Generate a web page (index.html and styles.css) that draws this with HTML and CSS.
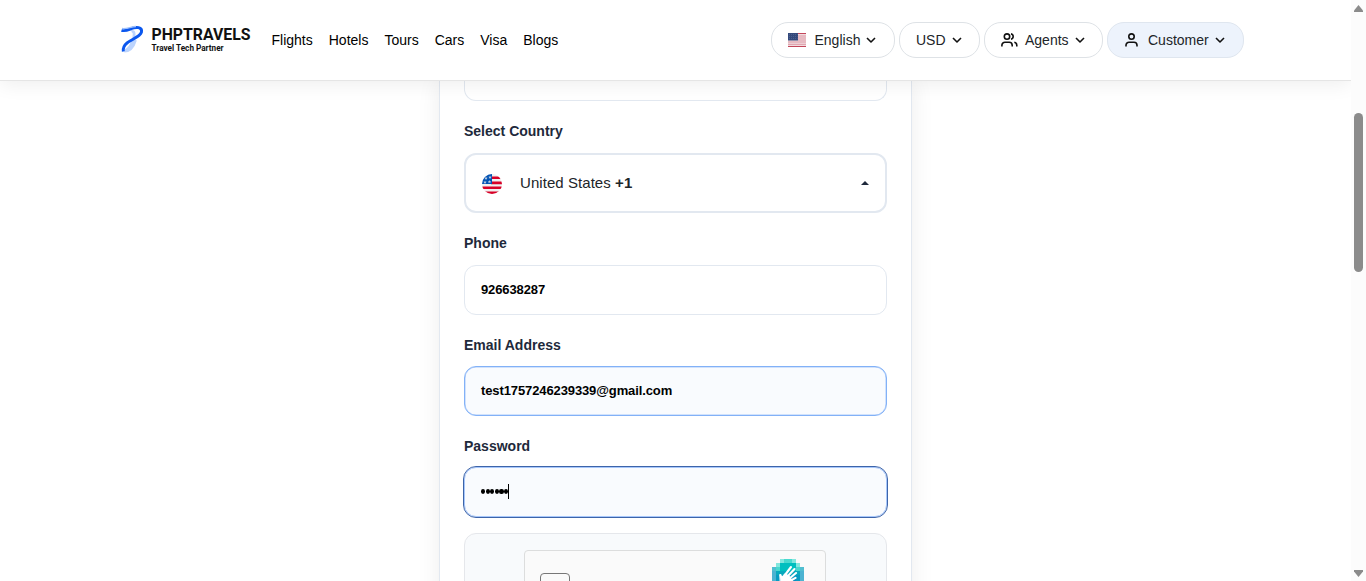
FILE: index.html
```html
<!DOCTYPE html>
<html lang="en">
<head>
<meta charset="utf-8">
<title>PHPTRAVELS</title>
<link rel="stylesheet" href="styles.css">
</head>
<body>
<div class="viewport">
  <div class="page">
    <header class="header">
      <div class="brand">
        <svg class="brand-mark" viewBox="0 0 24 28" fill="none">
          <path d="M11.500 6.500C15 5.500 14.500 11 13 15C11.500 20 9 24.500 4.500 26C11 26 14 20 15.500 15" stroke="#bcd4fd" stroke-width="2.800"/>
          <path d="M1.500 5.300C5 6.500 8 5 11 3.800C16 1.500 22.500 2 21.500 7C20 12 12 14 7 18C4 20.500 2.800 23 3.300 26.500" stroke="#0b57ee" stroke-width="2.900"/>
          <path d="M2 3.500C7 4.300 11 1.500 16 1.500" stroke="#9fc0fb" stroke-width="1.300"/>
        </svg>
        <div class="brand-text">
          <span class="brand-name">PHPTRAVELS</span>
          <span class="brand-tag">Travel Tech Partner</span>
        </div>
      </div>
      <nav class="nav"><a>Flights</a><a>Hotels</a><a>Tours</a><a>Cars</a><a>Visa</a><a>Blogs</a></nav>
      <div class="actions">
        <button class="pill language">
          <svg class="flag" viewBox="0 0 18 14">
            <path fill="#f1dcdf" d="M0 0h18v14H0z"/>
            <path stroke="#c3465a" d="M0 .5h18M0 13.500h18"/>
            <path stroke="#dc98a4" d="M10 3h8M10 5h8M10 7h8M0 9h18M0 11.300h18"/>
            <path fill="#344a7c" d="M0 0h10v7.500H0z"/>
            <path stroke="#7182a8" stroke-width=".6" stroke-dasharray=".7 1.300" d="M1 1.500h8.500M1 3.500h8.500M1 5.500h8.500"/>
          </svg>
          <span>English</span>
          <svg class="chevron" viewBox="0 0 10 6"><path d="M1 1l4 4 4-4"/></svg>
        </button>
        <button class="pill currency"><span>USD</span><svg class="chevron" viewBox="0 0 10 6"><path d="M1 1l4 4 4-4"/></svg></button>
        <button class="pill agents">
          <svg class="people" viewBox="0 0 17 14"><circle cx="6" cy="3.600" r="2.700"/><path d="M.9 13.500v-1.300a3 3 0 0 1 3-3h4.300a3 3 0 0 1 3 3v1.300M10 .9a2.700 2.700 0 0 1 0 5.300M13.300 9.300a3 3 0 0 1 2.500 2.900v1.300"/></svg>
          <span>Agents</span>
          <svg class="chevron" viewBox="0 0 10 6"><path d="M1 1l4 4 4-4"/></svg>
        </button>
        <button class="pill customer">
          <svg class="person" viewBox="0 0 13 14"><circle cx="6.500" cy="3.600" r="2.700"/><path d="M1 13.500v-1.300a3 3 0 0 1 3-3h5a3 3 0 0 1 3 3v1.300"/></svg>
          <span>Customer</span>
          <svg class="chevron" viewBox="0 0 10 6"><path d="M1 1l4 4 4-4"/></svg>
        </button>
      </div>
    </header>
    <main class="card">
      <div class="field clipped"></div>
      <div class="label wide">Select Country</div>
      <div class="select">
        <svg class="round-flag" viewBox="0 0 20 20">
          <defs><clipPath id="disc"><circle cx="10" cy="10" r="10"/></clipPath></defs>
          <g clip-path="url(#disc)">
            <path fill="#f0f0f0" d="M0 0h20v20H0z"/>
            <path fill="#d80027" d="M9 2.500h11v2.600H9zM9 7.500h11v2.700H9zM0 12.500h20v2.600H0zM0 17.500h20V20H0z"/>
            <path fill="#0052b4" d="M0 0h10v10H0z"/>
            <path fill="#f0f0f0" opacity=".8" d="M4 2.500l.5 1.200h1.300l-1 .8.300 1.200L4 5l-1.200.7.400-1.200-1-.8h1.300zM8 1.500l.5 1.200h1.300l-1 .8.300 1.200L8 4l-1.200.7.400-1.200-1-.8h1.300zM3 6.500l.5 1.200h1.300l-1 .8.300 1.200L3 9l-1.200.7.400-1.200-1-.8h1.300zM7.500 6l.5 1.200h1.300l-1 .8.300 1.200-1.100-.7-1.200.7.400-1.200-1-.8H7z"/>
          </g>
        </svg>
        <span class="country">United States <b>+1</b></span>
        <span class="caret-up"></span>
      </div>
      <div class="label wide">Phone</div>
      <div class="field">926638287</div>
      <div class="label">Email Address</div>
      <div class="field filled">test1757246239339@gmail.com</div>
      <div class="label">Password</div>
      <div class="field filled focused"><span class="dots"><i></i><i></i><i></i><i></i><i></i><i></i></span><span class="cursor"></span></div>
      <div class="captcha-area">
        <div class="captcha">
          <div class="checkbox"></div>
          <svg class="captcha-logo" viewBox="0 0 32 32" shape-rendering="crispEdges">
            <path fill="#83e7de" d="M4 4h4V0h16v4h4v4h4v20h-4v4H4v-4H0V8h4z"/>
            <path fill="#48d9cf" d="M12 0h8v4h-8zM4 8h4V4h16v4h4v4H4z"/>
            <path fill="#00bfbf" d="M8 4h16v8H8z"/>
            <path fill="#51bed0" d="M0 8h4v4H0zM28 8h4v4h-4z"/>
            <path fill="#08a9bd" d="M4 12h24v4H4z"/>
            <path fill="#4cb3d1" d="M0 12h4v16H0zM28 12h4v16h-4z"/>
            <path fill="#079bc2" d="M4 16h24v12H4z"/>
            <path fill="#078dbf" d="M8 20h16v8H8z"/>
            <g shape-rendering="auto" stroke="#fff" stroke-linecap="round" stroke-linejoin="round">
              <path stroke-width="2.100" d="M13 16l6-8M15.500 17.500l7-7.500M17.500 19.500l6.500-5.500M19 21.500l4.500-2.700M9.500 19l-1-3"/>
              <path fill="#fff" d="M8 16l2 2 3-3.500 4 2.500 3.500 5-4 4.500-4 1.500-4-4z"/>
            </g>
          </svg>
        </div>
      </div>
    </main>
  </div>
  <aside class="scrollbar">
    <svg class="arrow" viewBox="0 0 9 7"><path d="M4.500 0L9 5.500V7H0V5.500z"/></svg>
    <div class="thumb"></div>
    <svg class="arrow" viewBox="0 0 9 7"><path d="M4.500 7L9 1.500V0H0v1.500z"/></svg>
  </aside>
</div>
</body>
</html>
```
FILE: styles.css
```css
* { box-sizing: border-box; }
body { margin: 0; font-family: "Liberation Sans", Arial, sans-serif; background: #fff; overflow: hidden; }
svg { display: block; flex: none; }
.viewport { display: flex; width: 1366px; height: 581px; overflow: hidden; }
.page { width: 1351px; height: 581px; overflow: hidden; }

.header { position: relative; z-index: 2; display: flex; align-items: center; height: 81px; padding: 0 107px 1px 120px; background: #fff; border-bottom: 1px solid #e5e5e5; box-shadow: 0 4px 18px rgba(0, 0, 0, .065); }
.brand { display: flex; width: 151.500px; gap: 7.500px; align-items: center; }
.brand-mark { width: 24px; height: 28px; margin-top: -1px; }
.brand-text { display: flex; flex-direction: column; padding-top: 1px; color: #111; font-family: Roboto, sans-serif; }
.brand-name { font-size: 15.800px; line-height: 17px; font-weight: 700; }
.brand-tag { font-size: 8.200px; line-height: 11px; font-weight: 700; }
.nav { display: flex; gap: 16px; font-size: 14px; line-height: 20px; color: #000; }
.actions { display: flex; gap: 4px; margin-left: auto; }
.pill { display: flex; align-items: center; height: 36px; padding: 0 16px; border: 1px solid #dee2e6; border-radius: 17px; background: #fff; color: #212529; font: 14px/20px "Liberation Sans", Arial, sans-serif; }
.language { width: 124px; }
.currency { width: 81px; }
.agents { width: 119px; }
.customer { width: 137px; padding-left: 17px; background: #edf3fc; border-color: #dfe6ef; }
.flag { width: 18px; height: 14px; margin-right: 8.500px; }
.people { width: 17px; height: 14px; margin-right: 7px; }
.person { width: 13px; height: 14px; margin-right: 10px; }
.people, .person, .chevron { fill: none; stroke: #111; stroke-width: 1.600; stroke-linejoin: round; }
.chevron { width: 10px; height: 6px; margin-left: 5.500px; }
.currency .chevron, .agents .chevron, .customer .chevron { margin-left: 6.300px; }

.card { width: 473px; height: 700px; margin-left: 439px; padding: 0 24px; border: 1px solid #e2e8f0; border-top: 0; background: #fff; box-shadow: 0 0 22px rgba(0, 0, 0, .075); }
.label { height: 20px; margin: 20px 0 11px; color: #1e293b; font-size: 14px; line-height: 20px; font-weight: 700; }
.label.wide { margin-bottom: 12px; }
.field { display: flex; align-items: center; height: 50px; padding: 0 16px 2px; border: 1px solid #e2e8f0; border-radius: 12px; color: #000; font-size: 13px; font-weight: 700; letter-spacing: -.11px; }
.clipped { height: 20px; border-top: 0; border-radius: 0 0 12px 12px; }
.filled { background: #f9fbfe; border-color: #82b1f7; box-shadow: inset 0 0 0 .5px #a9c9fa; }
.focused { outline: 1px solid #3d64a9; border-color: #a7c7fb; box-shadow: none; padding-bottom: 1px; }
.select { display: flex; align-items: center; height: 60px; padding: 0 16px; border: 2px solid #e2e8f0; border-radius: 12px; }
.round-flag { width: 20px; height: 20px; margin-top: 1px; }
.country { margin-left: 18px; color: #212529; font-size: 15px; line-height: 20px; margin-top: -1px; letter-spacing: .06px; }
.caret-up { width: 8px; margin-left: auto; border: 4px solid transparent; border-top: 0; border-bottom-color: #1e293b; }
.dots { display: flex; gap: .3px; }
.dots i { width: 4.300px; height: 4.600px; border-radius: 50%; background: #000; }
.cursor { width: 1px; height: 15px; margin-left: -.5px; background: #000; }

.captcha-area { height: 112px; margin-top: 16px; padding: 16px 59px; border: 1px solid #e5e7eb; border-radius: 12px; background: #f8fafc; }
.captcha { display: flex; justify-content: space-between; width: 302px; height: 76px; padding: 8px 21px 0 15px; border: 1px solid #dcdddd; border-radius: 4px; background: #fafafa; }
.checkbox { width: 30px; height: 30px; margin-top: 14px; border: 1px solid #777; border-radius: 4px; background: #fafafa; }
.captcha-logo { width: 32px; height: 32px; }

.scrollbar { display: flex; flex-direction: column; align-items: center; justify-content: space-between; width: 15px; padding: 5px 0 4px; background: #fcfcfc; }
.arrow { width: 9px; height: 7px; fill: #8b8b8b; }
.thumb { width: 9px; height: 159px; margin-top: 101px; margin-bottom: auto; border-radius: 5px; background: #8b8b8b; }
```
